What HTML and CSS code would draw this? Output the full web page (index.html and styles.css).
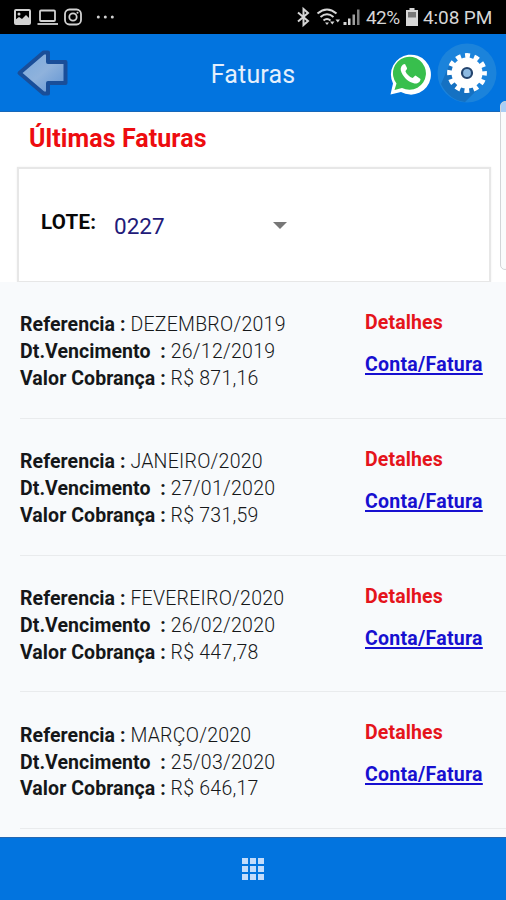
FILE: index.html
```html
<!DOCTYPE html>
<html lang="pt-BR">
<head>
<meta charset="utf-8">
<title>Faturas</title>
<link rel="stylesheet" href="styles.css">
</head>
<body>
<div class="statusbar">
  <svg class="notifications" width="130" height="34" viewBox="0 0 130 34" fill="none" stroke="#d2d2d2">
    <rect x="15" y="10" width="15" height="14" rx="1" stroke-width="2"/>
    <path d="M15 20l4-3 3 2 4-4 4 4v5H15z" fill="#d2d2d2" stroke="none"/>
    <circle cx="19" cy="14" r="1.5" fill="#d2d2d2" stroke="none"/>
    <rect x="40" y="10.500" width="15" height="10.500" rx="1" stroke-width="1.800"/>
    <path d="M37.500 24H58" stroke-width="1.800"/>
    <rect x="65" y="9.500" width="16" height="15" rx="4.500" stroke-width="1.800"/>
    <circle cx="73" cy="17" r="3.700" stroke-width="1.800"/>
    <circle cx="77.500" cy="12.700" r="1" fill="#d2d2d2" stroke="none"/>
    <g fill="#d2d2d2" stroke="none"><circle cx="98.300" cy="17" r="1.500"/><circle cx="105.300" cy="17" r="1.500"/><circle cx="112.300" cy="17" r="1.500"/></g>
  </svg>
  <div class="system">
    <svg width="68" height="34" viewBox="294 0 68 34" fill="none" stroke="#d6d6d6">
      <path d="M298 12.500l10 8.500-4.500 4V9l4.500 4-10 8.500" stroke-width="2"/>
      <g stroke-width="2"><path d="M317.500 13.500Q327 5.500 336.500 13.500M320.500 17Q327 11.500 333.500 17M323.500 20.500Q327 17.500 330.500 20.500"/></g>
      <path d="M325 22.500h4l-2 2.500zM330 21.500h4.500l-2.200 3zM335.500 19.500h4.500l-2.200 3z" fill="#d6d6d6" stroke="none"/>
      <g fill="#d6d6d6" stroke="none"><path d="M343.500 25v-3h3v3z"/><path d="M348 25v-6.500h2.500V25z"/><path d="M352.500 25V14.500h2.500V25z" opacity=".75"/><path d="M357 25V9.500h2.500V25z" opacity=".6"/></g>
    </svg>
    <span class="percent">42%</span>
    <svg class="battery" width="12" height="18" viewBox="0 0 12 18"><path d="M3.500 0h5v2H12v16H0V2h3.500z" fill="#d6d6d6"/><path d="M2 4h8v5.500H2z" fill="#777"/></svg>
    <span class="clock">4:08 PM</span>
  </div>
</div>
<header class="appbar">
  <svg class="back" width="60" height="60" viewBox="14 43 60 60">
    <defs><linearGradient id="steel" x1="0" y1="0" x2="1" y2="1"><stop offset="0" stop-color="#76a8dd"/><stop offset=".5" stop-color="#8fb2dc"/><stop offset="1" stop-color="#5c91d2"/></linearGradient></defs>
    <path d="M19.500 73L43.500 52.500h4.500v9.500h17.500V83H48v10.500h-4.500z" fill="url(#steel)" stroke="#194e99" stroke-width="4" stroke-linejoin="round"/>
  </svg>
  <h1 class="title">Faturas</h1>
  <div class="actions">
    <svg width="44" height="46" viewBox="390 51 44 46">
      <path d="M391.500 95.500l2.500-11A20 20 0 1 1 402 93z" fill="#fff"/>
      <path d="M395.500 91l2-6.500A16.500 16.500 0 1 1 403 89z" fill="#38bf4d"/>
      <path d="M404 65.500c-2.500 2-3 5-1.500 8 3 6 7 9.500 13 11 3 .5 6-1.500 6-4.500l-5-3.500c-1 0-2 2.500-3 2.500-3-1-6-4-7-6.500 0-1.500 2-2 1.500-3.500l-2-4z" fill="#fff"/>
    </svg>
    <svg width="62" height="62" viewBox="435 42 62 62">
      <circle cx="467" cy="73" r="29.500" fill="#1b83db"/>
      <path d="M451 61l-10 23q8 16 24 18l13-13-16-13z" fill="#1571c2"/>
      <circle cx="467" cy="73" r="15.500" fill="#fff"/>
      <circle cx="467" cy="73" r="17.200" fill="none" stroke="#fff" stroke-width="5.400" stroke-dasharray="4.900 4.106" stroke-dashoffset="2.450"/>
      <circle cx="467" cy="73" r="5" fill="#8dbae2" stroke="#24446d" stroke-width="2.200"/>
    </svg>
  </div>
</header>
<main>
  <section class="intro">
    <h2 class="heading">Últimas Faturas</h2>
    <div class="filter">
      <span class="lot-label">LOTE:</span>
      <span class="lot-value">0227</span>
      <span class="caret"></span>
    </div>
  </section>
  <section class="invoices">
    <article class="invoice">
      <div class="data"><p><b>Referencia :</b> <span>DEZEMBRO/2019</span></p><p><b>Dt.Vencimento &nbsp;:</b> <span>26/12/2019</span></p><p><b>Valor Cobrança :</b> <span>R$ 871,16</span></p></div>
      <div class="links"><span class="details">Detalhes</span><a class="bill" href="#">Conta/Fatura</a></div>
    </article>
    <article class="invoice">
      <div class="data"><p><b>Referencia :</b> <span>JANEIRO/2020</span></p><p><b>Dt.Vencimento &nbsp;:</b> <span>27/01/2020</span></p><p><b>Valor Cobrança :</b> <span>R$ 731,59</span></p></div>
      <div class="links"><span class="details">Detalhes</span><a class="bill" href="#">Conta/Fatura</a></div>
    </article>
    <article class="invoice">
      <div class="data"><p><b>Referencia :</b> <span>FEVEREIRO/2020</span></p><p><b>Dt.Vencimento &nbsp;:</b> <span>26/02/2020</span></p><p><b>Valor Cobrança :</b> <span>R$ 447,78</span></p></div>
      <div class="links"><span class="details">Detalhes</span><a class="bill" href="#">Conta/Fatura</a></div>
    </article>
    <article class="invoice">
      <div class="data"><p><b>Referencia :</b> <span>MARÇO/2020</span></p><p><b>Dt.Vencimento &nbsp;:</b> <span>25/03/2020</span></p><p><b>Valor Cobrança :</b> <span>R$ 646,17</span></p></div>
      <div class="links"><span class="details">Detalhes</span><a class="bill" href="#">Conta/Fatura</a></div>
    </article>
  </section>
</main>
<footer class="bottombar"><div class="grid-icon"><i></i><i></i><i></i><i></i><i></i><i></i><i></i><i></i><i></i></div></footer>
<div class="edge-handle"></div>
</body>
</html>
```
FILE: styles.css
```css
* { box-sizing: border-box; }
body {
  position: relative;
  width: 506px;
  height: 900px;
  margin: 0;
  display: flex;
  flex-direction: column;
  overflow: hidden;
  background: #fff;
  font-family: Roboto, "Liberation Sans", sans-serif;
  color: #151719;
}
h1, h2, p { margin: 0; }
svg { display: block; flex: none; }
.statusbar {
  height: 34px;
  flex: none;
  display: flex;
  justify-content: space-between;
  background: #000;
  color: #d6d6d6;
}
.system { display: flex; align-items: center; width: 212px; font-size: 19px; line-height: 34px; white-space: nowrap; }
.percent { width: 38px; margin: 2px 0 0 4px; letter-spacing: -.6px; }
.battery { margin-left: 2px; }
.clock { margin: 2px 0 0 5px; letter-spacing: -.1px; }
.appbar {
  height: 78px;
  flex: none;
  display: grid;
  grid-template-columns: 154px 1fr 154px;
  align-items: center;
  background: #0274df;
  border-bottom: 1px solid #1768b9;
}
.back { margin-left: 14px; }
.title { text-align: center; font-size: 25px; font-weight: 400; line-height: 30px; color: #e4effc; margin-top: 4px; letter-spacing: .15px; }
.actions { display: flex; align-items: center; margin-left: 37px; gap: 2px; }
main { flex: 1; display: flex; flex-direction: column; min-height: 0; }
.intro { height: 170px; flex: none; padding: 12px 15px 0 17px; overflow: hidden; }
.heading { margin-left: 12px; font-size: 25px; line-height: 30px; font-weight: 700; letter-spacing: .08px; color: #ed0c0f; }
.filter {
  display: flex;
  align-items: center;
  height: 115px;
  margin-top: 13px;
  padding-left: 22px;
  border: 2px solid #e7e7e7;
  border-bottom-width: 1px;
  background: #fff;
  box-shadow: 0 0 2px #eee;
}
.lot-label { width: 73px; margin-top: -7px; font-size: 20.500px; line-height: 24px; font-weight: 700; letter-spacing: .3px; color: #080808; }
.lot-value { width: 159px; margin-top: 1px; font-size: 22.500px; line-height: 26px; color: #221a79; }
.caret { margin-top: 1px; border: 7px solid transparent; border-top-color: #777; border-bottom: 0; }
.invoices { flex: 1; padding-left: 20px; background: #f8fafc; min-height: 0; }
.invoice { height: 136.800px; display: flex; border-bottom: 1.500px solid #e9ebed; }
.data { width: 345px; padding-top: 30.400px; font-size: 19.500px; line-height: 26.800px; white-space: pre; }
.data b { font-weight: 700; letter-spacing: .06px; }
.data span { font-weight: 300; letter-spacing: .25px; }
.links { display: flex; flex-direction: column; align-items: flex-start; padding-top: 28px; font-size: 19.500px; font-weight: 700; line-height: 26px; }
.details { color: #e5141b; letter-spacing: .12px; }
.bill { margin-top: 16px; color: #1710d0; letter-spacing: .27px; text-decoration-thickness: 1.500px; text-underline-offset: 2px; }
.bottombar { height: 63px; flex: none; display: flex; justify-content: center; padding-top: 20px; background: #0274df; border-top: 1px solid #2467b2; }
.grid-icon { display: grid; grid-template-columns: repeat(3, 6px); grid-auto-rows: 6px; gap: 2px; width: 22px; height: 22px; }
.grid-icon i { background: #c3dcfb; }
.edge-handle { position: absolute; left: 500px; top: 101px; width: 10px; height: 169px; border: 1px solid #d2d5d8; border-radius: 6px; background: linear-gradient(#a9cef5 10px, #fafbfc 10px); }
```
